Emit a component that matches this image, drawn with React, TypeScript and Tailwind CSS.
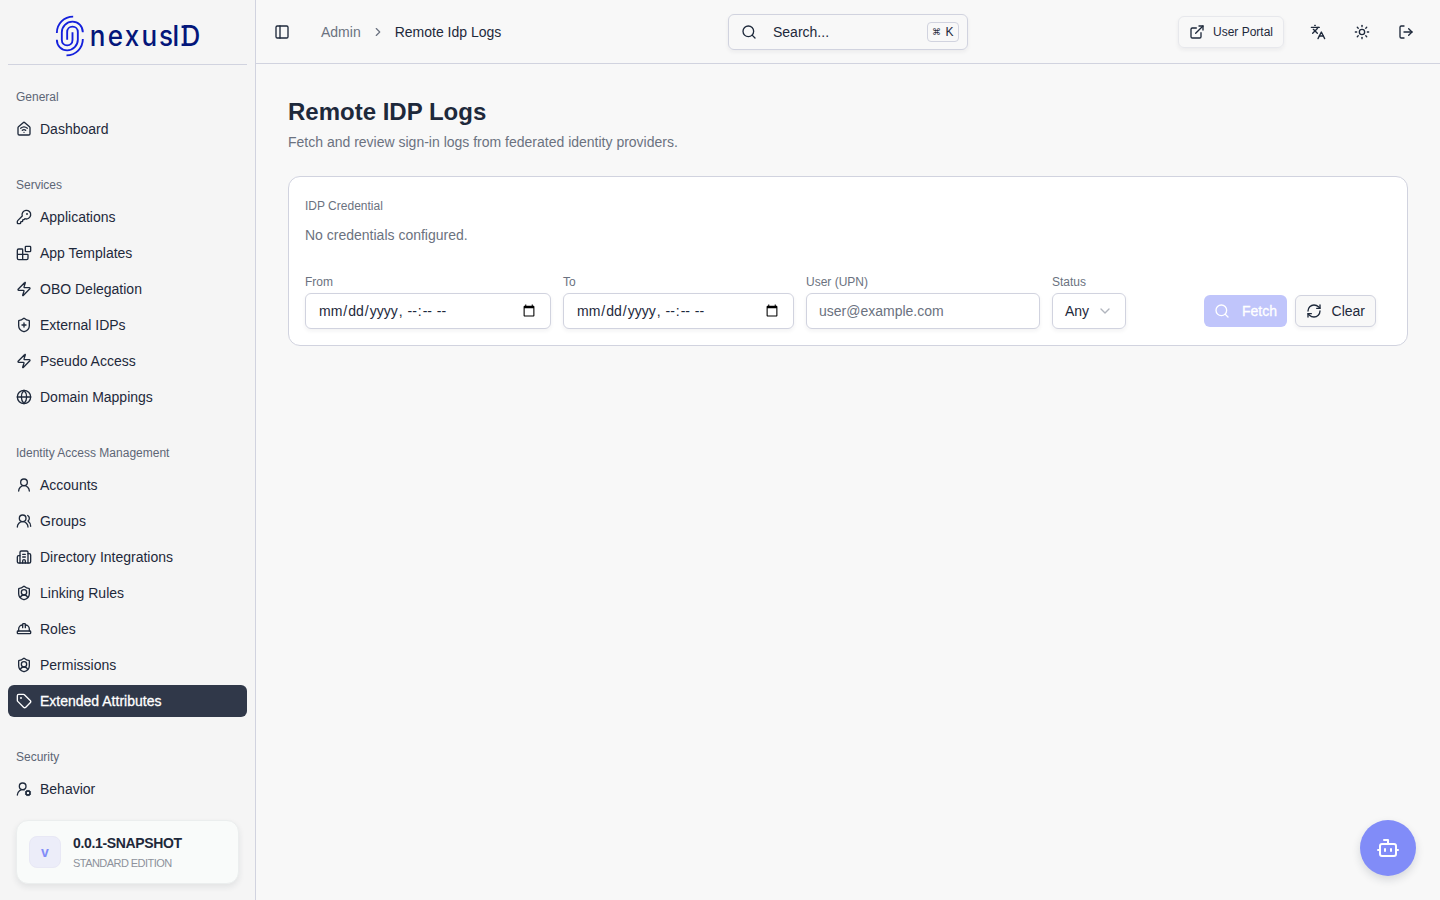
import {
    Blocks,
    Bot,
    Building2,
    ChevronDown,
    ChevronRight,
    ExternalLink,
    Globe,
    HardHat,
    HouseWifi,
    KeyRound,
    Languages,
    LogOut,
    PanelLeft,
    RefreshCw,
    Search,
    ShieldPlus,
    ShieldUser,
    Sun,
    Tag,
    UserRound,
    UserRoundCog,
    UsersRound,
    Zap,
    type LucideIcon,
} from "lucide-react";

type NavItem = { label: string; icon: LucideIcon; active?: boolean };
type NavGroup = { title: string; items: NavItem[] };

const navGroups: NavGroup[] = [
    {
        title: "General",
        items: [{ label: "Dashboard", icon: HouseWifi }],
    },
    {
        title: "Services",
        items: [
            { label: "Applications", icon: KeyRound },
            { label: "App Templates", icon: Blocks },
            { label: "OBO Delegation", icon: Zap },
            { label: "External IDPs", icon: ShieldPlus },
            { label: "Pseudo Access", icon: Zap },
            { label: "Domain Mappings", icon: Globe },
        ],
    },
    {
        title: "Identity Access Management",
        items: [
            { label: "Accounts", icon: UserRound },
            { label: "Groups", icon: UsersRound },
            { label: "Directory Integrations", icon: Building2 },
            { label: "Linking Rules", icon: ShieldUser },
            { label: "Roles", icon: HardHat },
            { label: "Permissions", icon: ShieldUser },
            { label: "Extended Attributes", icon: Tag, active: true },
        ],
    },
    {
        title: "Security",
        items: [{ label: "Behavior", icon: UserRoundCog }],
    },
];

const softShadow = "shadow-[0_2px_4px_rgba(30,41,59,0.06)]";

const inputClass =
    "h-9 w-full rounded-md border border-[#d1d3df] bg-white px-3 py-1 text-sm text-[#1e293b] shadow-[0_2px_4px_rgba(30,41,59,0.06)] outline-none placeholder:text-[#6b7280]";

function Logo() {
    return (
        <div className="flex h-14 items-center justify-center">
            <svg width="149" height="44" viewBox="53 14 149 44" fill="none">
                <g transform="translate(40.5 0) scale(0.3333)" stroke="#1420dc" strokeWidth="5.6">
                    <path d="M98 50C70 50 49 72 49 99" />
                    <path d="M78 166C106 166 127 144 127 117" />
                    <path d="M127 97C127 78 113 65 96 65C78 65 64 80 64 97V120C64 130 71 136 80 136C89 136 96 130 96 120V97" />
                    <path d="M49 119C49 138 63 151 80 151C98 151 112 136 112 119V96C112 86 105 80 96 80C87 80 80 86 80 96V119" />
                </g>
                <text
                    transform="translate(89.8 46) scale(0.93 1)"
                    x="0 19.25 37.5 55.6 74.3 88.7 98.5"
                    y="0"
                    fill="#04167a"
                    className="font-['Inter',sans-serif] text-[28px] font-medium"
                >
                    nexusID
                </text>
                {/* slabs on the D */}
                <path d="M181.6 26.8H187M181.6 44.8H187" stroke="#04167a" strokeWidth="2.4" />
            </svg>
        </div>
    );
}

function Sidebar() {
    return (
        <aside className="flex h-full w-64 shrink-0 flex-col border-r border-[#d1d3df] bg-[#f5f5f5]">
            <div className="mx-2 border-b border-[#d1d3df] pt-2">
                <Logo />
            </div>
            <nav className="flex min-h-0 flex-1 flex-col gap-2 overflow-hidden pt-2">
                {navGroups.map((group) => (
                    <div key={group.title} className="px-2 py-2">
                        <div className="flex h-8 items-center px-2 text-xs text-[#5d6675]">{group.title}</div>
                        <ul className="flex flex-col gap-1">
                            {group.items.map(({ label, icon: Icon, active }) => (
                                <li
                                    key={label}
                                    className={`flex h-8 items-center gap-2 rounded-md px-2 text-sm ${
                                        active ? "bg-[#303849] text-white" : "text-[#1e293b]"
                                    }`}
                                >
                                    <Icon size={16} />
                                    <span className={active ? "[-webkit-text-stroke:0.3px_white]" : ""}>{label}</span>
                                </li>
                            ))}
                        </ul>
                    </div>
                ))}
            </nav>
            <div className="mx-4 mb-4 flex h-16 shrink-0 items-center gap-3 rounded-xl border border-[#ebeeee] bg-[#f9fbfa] px-3 shadow-[0_3px_6px_rgba(30,41,59,0.09)]">
                <div className="flex size-8 items-center justify-center rounded-lg border border-[#e8e8f5] bg-[#ecedf9] text-sm font-bold text-[#818cf8]">
                    v
                </div>
                <div className="pt-[2px]">
                    <div className="text-sm font-bold tracking-tight text-[#1e293b]">0.0.1-SNAPSHOT</div>
                    <div className="text-[11px] leading-5 tracking-[-0.55px] text-[#8d929c]">STANDARD EDITION</div>
                </div>
            </div>
        </aside>
    );
}

function Header() {
    return (
        <header className="flex h-16 shrink-0 items-center border-b border-[#d1d3df] text-[#1e293b]">
            <div className="flex w-[472px] items-center pl-[18px]">
                <PanelLeft size={16} />
                <div className="ml-[31px] flex items-center text-sm">
                    <span className="text-[#6b7280]">Admin</span>
                    <ChevronRight size={14} className="mx-[10px] text-[#6b7280]" />
                    <span>Remote Idp Logs</span>
                </div>
            </div>
            <button className={`flex h-9 w-60 items-center rounded-md border border-[#d1d3df] pr-2 pl-3 text-sm ${softShadow}`}>
                <Search size={16} />
                <span className="ml-4">Search...</span>
                <kbd className="ml-auto flex h-5 w-8 items-center justify-center gap-1 rounded border border-[#d1d3df] font-['Liberation_Sans',sans-serif] text-xs">
                    <span className="text-[9px]">⌘</span>K
                </kbd>
            </button>
            <div className="ml-auto flex items-center pr-[26px]">
                <button className={`flex h-8 w-[106px] items-center justify-center gap-2 rounded-md border border-[#e7e8ec] text-xs ${softShadow}`}>
                    <ExternalLink size={16} />
                    User Portal
                </button>
                <div className="ml-[26px] flex gap-7">
                    <Languages size={16} />
                    <Sun size={16} />
                    <LogOut size={16} />
                </div>
            </div>
        </header>
    );
}

function Filters() {
    return (
        <section className="mt-6 h-[170px] rounded-xl border border-[#d1d3df] bg-white px-4 pt-5">
            <div className="text-xs leading-[18px] text-[#6b7280]">IDP Credential</div>
            <p className="mt-[10px] text-sm text-[#6b7280]">No credentials configured.</p>
            <div className="mt-[29px] flex items-end">
                <label className="flex w-[246px] flex-col gap-[3px] text-xs text-[#6b7280]">
                    From
                    <input type="datetime-local" className={inputClass} />
                </label>
                <label className="ml-3 flex w-[231px] flex-col gap-[3px] text-xs text-[#6b7280]">
                    To
                    <input type="datetime-local" className={inputClass} />
                </label>
                <label className="ml-3 flex w-[234px] flex-col gap-[3px] text-xs text-[#6b7280]">
                    User (UPN)
                    <input type="text" placeholder="user@example.com" className={inputClass} />
                </label>
                <div className="ml-3 flex w-[74px] flex-col gap-[3px] text-xs text-[#6b7280]">
                    Status
                    <button className={`flex h-9 items-center justify-between rounded-md border border-[#d1d3df] px-3 text-sm text-[#1e293b] ${softShadow}`}>
                        Any
                        <ChevronDown size={16} className="text-[#b0b4bd]" />
                    </button>
                </div>
                <div className="mr-[15px] mb-[2px] ml-auto flex gap-2 text-sm">
                    <button className="flex h-8 w-[83px] items-center justify-between rounded-md bg-[#c0c5fb] px-[10px] text-white" disabled>
                        <Search size={16} />
                        <span className="[-webkit-text-stroke:0.3px_white]">Fetch</span>
                    </button>
                    <button className={`flex h-8 w-[81px] items-center justify-between rounded-md border border-[#d1d3df] bg-[#f8f8f8] px-[10px] text-[#1e293b] ${softShadow}`}>
                        <RefreshCw size={16} />
                        Clear
                    </button>
                </div>
            </div>
        </section>
    );
}

export default function App() {
    return (
        <div className="flex h-screen overflow-hidden bg-[#f8f8f8] font-['Liberation_Sans',Arial,sans-serif]">
            <Sidebar />
            <div className="flex min-w-0 flex-1 flex-col">
                <Header />
                <main className="px-8 pt-8">
                    <h1 className="text-2xl font-bold text-[#1e293b]">Remote IDP Logs</h1>
                    <p className="mt-1 text-sm text-[#6b7280]">
                        Fetch and review sign-in logs from federated identity providers.
                    </p>
                    <Filters />
                </main>
            </div>
            <button className="fixed right-6 bottom-6 flex size-14 items-center justify-center rounded-full bg-[#818cf8] text-white shadow-[0_4px_8px_rgba(30,41,59,0.15)]">
                <Bot size={24} />
            </button>
        </div>
    );
}
